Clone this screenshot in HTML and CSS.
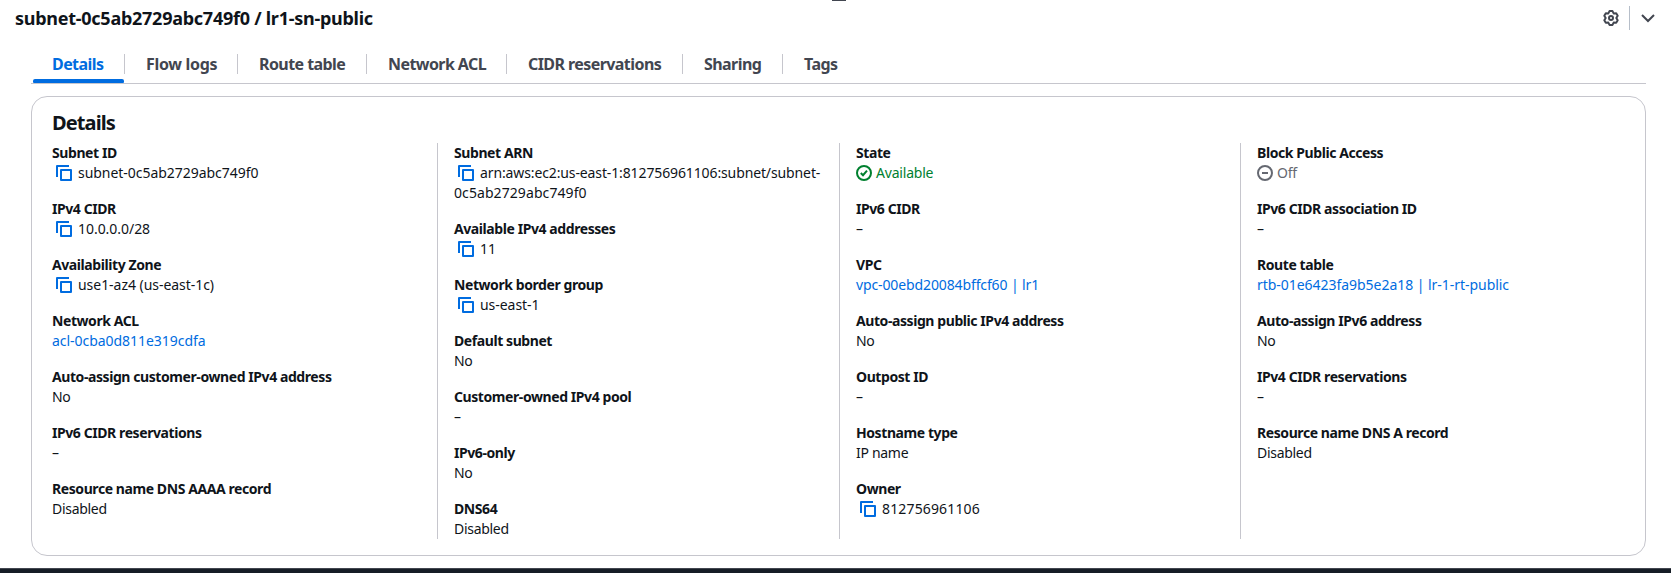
FILE: index.html
```html
<!DOCTYPE html>
<html lang="en">
<head>
<meta charset="utf-8">
<title>Subnet details</title>
<link rel="stylesheet" href="styles.css">
</head>
<body>
<svg class="sprite" aria-hidden="true">
  <symbol id="copy" viewBox="0 0 16 16"><path d="M1 12V1h12M5 5h10v10H5z" fill="none" stroke="currentColor" stroke-width="2" stroke-linejoin="round"/></symbol>
  <symbol id="ok" viewBox="0 0 16 16"><circle cx="8" cy="8" r="7" fill="none" stroke="currentColor" stroke-width="2"/><path d="M4.800 8l2.200 2.200 4-4.600" fill="none" stroke="currentColor" stroke-width="2"/></symbol>
  <symbol id="off" viewBox="0 0 16 16"><circle cx="8" cy="8" r="7" fill="none" stroke="currentColor" stroke-width="2"/><path d="M5 8h6" stroke="currentColor" stroke-width="2"/></symbol>
</svg>
<div class="panel">
  <span class="drag-handle"></span>
  <header class="panel-header">
    <h1>subnet-0c5ab2729abc749f0 / lr1-sn-public</h1>
    <div class="actions">
      <svg class="gear" viewBox="0 0 16 16" fill="none" stroke="currentColor" stroke-width="2" stroke-linejoin="round"><path d="M6.500 1.100h3l1.150 2.300 2.550-.1 1.500 2.500L13.300 8l1.400 2.200-1.500 2.500-2.550-.1-1.150 2.300h-3l-1.150-2.300-2.550.1-1.500-2.500L2.700 8 1.300 5.800l1.500-2.500 2.550.1z"/><circle cx="8" cy="8" r="2"/></svg>
      <span class="rule"></span>
      <svg class="chevron" viewBox="0 0 16 16" fill="none" stroke="currentColor" stroke-width="2"><path d="M2 5l6 6 6-6"/></svg>
    </div>
  </header>
  <nav class="tabs">
    <a class="tab active">Details</a>
    <a class="tab tab-flow">Flow logs</a>
    <a class="tab tab-route">Route table</a>
    <a class="tab tab-acl">Network ACL</a>
    <a class="tab tab-cidr">CIDR reservations</a>
    <a class="tab tab-share">Sharing</a>
    <a class="tab">Tags</a>
  </nav>
  <section class="card">
    <h2>Details</h2>
    <div class="columns">
      <dl class="column">
        <div><dt>Subnet ID</dt><dd class="id"><svg class="copy"><use href="#copy"/></svg>subnet-0c5ab2729abc749f0</dd></div>
        <div><dt>IPv4 CIDR</dt><dd class="id"><svg class="copy"><use href="#copy"/></svg>10.0.0.0/28</dd></div>
        <div><dt>Availability Zone</dt><dd class="id"><svg class="copy"><use href="#copy"/></svg>use1-az4 (us-east-1c)</dd></div>
        <div><dt>Network ACL</dt><dd class="id"><a>acl-0cba0d811e319cdfa</a></dd></div>
        <div><dt>Auto-assign customer-owned IPv4 address</dt><dd>No</dd></div>
        <div><dt>IPv6 CIDR reservations</dt><dd>–</dd></div>
        <div><dt>Resource name DNS AAAA record</dt><dd>Disabled</dd></div>
      </dl>
      <dl class="column">
        <div><dt>Subnet ARN</dt><dd class="arn"><svg class="copy"><use href="#copy"/></svg>arn:aws:ec2:us-east-1:812756961106:subnet/subnet-<br><span class="arn-tail">0c5ab2729abc749f0</span></dd></div>
        <div><dt>Available IPv4 addresses</dt><dd class="id"><svg class="copy"><use href="#copy"/></svg>11</dd></div>
        <div><dt>Network border group</dt><dd class="id"><svg class="copy"><use href="#copy"/></svg>us-east-1</dd></div>
        <div><dt>Default subnet</dt><dd>No</dd></div>
        <div><dt>Customer-owned IPv4 pool</dt><dd>–</dd></div>
        <div><dt>IPv6-only</dt><dd>No</dd></div>
        <div><dt>DNS64</dt><dd>Disabled</dd></div>
      </dl>
      <dl class="column">
        <div><dt>State</dt><dd class="ok"><svg class="status"><use href="#ok"/></svg>Available</dd></div>
        <div><dt>IPv6 CIDR</dt><dd>–</dd></div>
        <div><dt>VPC</dt><dd class="arn"><a>vpc-00ebd20084bffcf60 | lr1</a></dd></div>
        <div><dt>Auto-assign public IPv4 address</dt><dd>No</dd></div>
        <div><dt>Outpost ID</dt><dd>–</dd></div>
        <div><dt>Hostname type</dt><dd>IP name</dd></div>
        <div><dt>Owner</dt><dd class="account"><svg class="copy"><use href="#copy"/></svg>812756961106</dd></div>
      </dl>
      <dl class="column">
        <div><dt>Block Public Access</dt><dd class="off"><svg class="status"><use href="#off"/></svg>Off</dd></div>
        <div><dt>IPv6 CIDR association ID</dt><dd>–</dd></div>
        <div><dt>Route table</dt><dd class="id"><a>rtb-01e6423fa9b5e2a18 | lr-1-rt-public</a></dd></div>
        <div><dt>Auto-assign IPv6 address</dt><dd>No</dd></div>
        <div><dt>IPv4 CIDR reservations</dt><dd>–</dd></div>
        <div><dt>Resource name DNS A record</dt><dd>Disabled</dd></div>
      </dl>
    </div>
  </section>
</div>
<footer class="footer"></footer>
</body>
</html>
```
FILE: styles.css
```css
* { box-sizing: border-box; margin: 0; }
body { height: 573px; display: flex; flex-direction: column; overflow: hidden; background: #fff; color: #0f141a; font: 14px/20px "Noto Sans", "Open Sans", sans-serif; }
.sprite { position: absolute; width: 0; height: 0; }
.panel { position: relative; flex: 1; }
.drag-handle { position: absolute; left: 832px; top: 0; width: 14px; height: 1px; background: #424650; }
.panel-header { display: flex; justify-content: space-between; height: 44px; padding: 6px 15px 0; }
h1 { font-size: 18px; line-height: 24px; font-weight: 700; letter-spacing: -0.26px; }
.actions { display: flex; align-items: center; height: 24px; color: #424650; }
.gear { width: 16px; height: 16px; }
.rule { width: 1px; height: 24px; margin: 0 10px; background: #b6bec9; }
.chevron { width: 16px; height: 16px; }
.tabs { display: flex; height: 40px; margin: 0 25px 0 31px; padding-left: 2px; border-bottom: 1px solid #c6c6cd; }
.tab { position: relative; height: 39px; padding: 10px 0 0 21px; color: #424650; font-size: 16px; font-weight: 700; line-height: 20px; letter-spacing: -0.57px; white-space: nowrap; }
.tab:not(:last-child)::before { content: ""; position: absolute; right: 0; top: 10px; width: 1px; height: 20px; background: #c6c6cd; }
.tab.active { width: 92px; padding-left: 19px; color: #006ce0; }
.active::after { content: ""; position: absolute; left: 0; right: 1px; bottom: 0; height: 4px; border-radius: 2px 2px 1px 1px; background: #006ce0; }
.tab-flow { width: 113px; letter-spacing: -0.3px; }
.tab-route { width: 129px; }
.tab-acl { width: 140px; }
.tab-cidr { width: 176px; }
.tab-share { width: 100px; }
.card { height: 460px; margin: 12px 25px 0 31px; padding: 14px 20px 0; border: 1px solid #c6c6cd; border-radius: 16px; }
h2 { height: 32px; font-size: 20px; line-height: 24px; font-weight: 700; letter-spacing: -0.9px; }
.columns { display: grid; grid-template-columns: 385px 402px 401px 1fr; height: 396px; }
.column { display: flex; flex-direction: column; gap: 16px; }
.column + .column { padding-left: 16px; border-left: 1px solid #c6c6cd; }
dt { font-weight: 700; letter-spacing: -0.42px; white-space: nowrap; }
dd { letter-spacing: -0.3px; white-space: nowrap; }
dd a { color: #006ce0; }
.id { letter-spacing: -0.04px; }
.arn { letter-spacing: -0.12px; }
.arn-tail { letter-spacing: 0.08px; }
.account { letter-spacing: 0.15px; }
.copy { width: 16px; height: 16px; margin: 0 6px 0 4px; vertical-align: -3px; color: #006ce0; }
.status { width: 16px; height: 16px; margin-right: 4px; vertical-align: -3px; }
.ok { color: #00802f; letter-spacing: -0.2px; }
.off { color: #656871; }
.footer { height: 5px; border-top: 1px solid #424650; background: #161d26; }
```
